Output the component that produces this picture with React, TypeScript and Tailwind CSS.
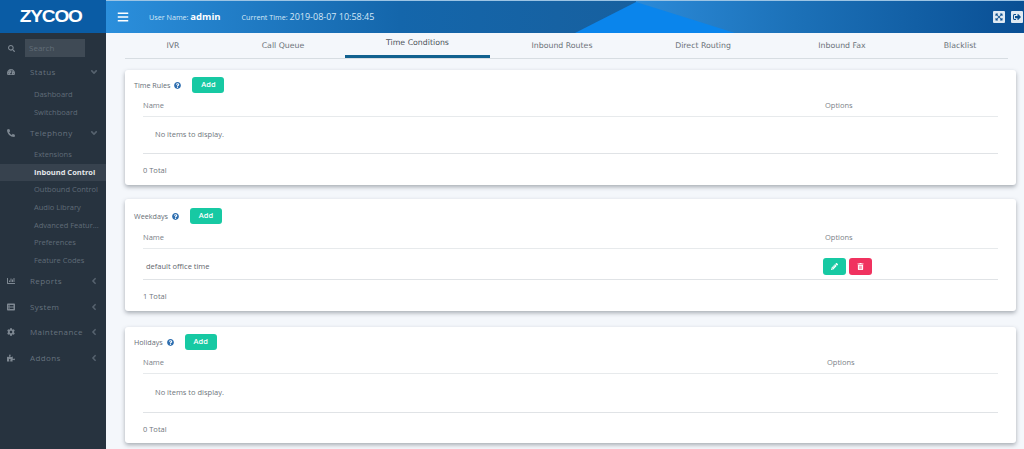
import React from 'react'
import {
  FaAngleDown,
  FaAngleLeft,
  FaBars,
  FaChartBar,
  FaCog,
  FaExpandArrowsAlt,
  FaListAlt,
  FaPencilAlt,
  FaPhone,
  FaPuzzlePiece,
  FaQuestionCircle,
  FaSearch,
  FaSignOutAlt,
  FaTachometerAlt,
  FaTrashAlt,
} from 'react-icons/fa'

const tabs = [
  { name: 'IVR', width: 'w-[96px]' },
  { name: 'Call Queue', width: 'w-[124px]' },
  { name: 'Time Conditions', width: 'w-[145px]', active: true },
  { name: 'Inbound Routes', width: 'w-[144px]' },
  { name: 'Direct Routing', width: 'w-[138px]' },
  { name: 'Inbound Fax', width: 'w-[140px]' },
  { name: 'Blacklist', width: 'w-[96px]' },
]

const SideHead = ({ icon, label, open, className }: { icon: React.ReactNode; label: string; open?: boolean; className: string }) => (
  <div className={`flex items-center text-[8px] text-[#66727e] ${className}`}>
    <span className="w-[30px] pl-[7px] text-[8px] text-[#7e8892]">{icon}</span>
    <span className="flex-1 tracking-[0.4px]">{label}</span>
    <span className="w-[17px] text-[10px] text-[#56626e]">{open ? <FaAngleDown /> : <FaAngleLeft />}</span>
  </div>
)

const SubItem = ({ label, active }: { label: string; active?: boolean }) => (
  <div className={`h-[17.6px] pl-[34px] text-[7.5px] leading-[17.6px] whitespace-nowrap ${active ? 'bg-[#37424e] font-bold text-[#e4e7ea]' : 'text-[#606c78]'}`}>
    {label}
  </div>
)

const Sidebar = () => (
  <aside className="flex h-full w-[106px] shrink-0 flex-col bg-[#27333f] font-['Open_Sans',sans-serif]">
    <div className="flex h-[33px] items-center justify-center bg-[#0a5ca5] pr-[4px]">
      <span className="scale-x-[1.12] font-['Liberation_Sans',sans-serif] text-[17px] font-bold leading-none tracking-[-1px] text-white">ZYCOO</span>
    </div>
    <div className="flex items-center pt-[6px]">
      <span className="w-[25px] pl-[8px] text-[7px] text-[#7e8892]"><FaSearch /></span>
      <div className="flex h-[18px] w-[60px] items-center bg-[#3f4a55] pl-[4px] text-[8px] text-[#626d78]">Search</div>
    </div>
    <SideHead icon={<FaTachometerAlt />} label="Status" open className="mt-[5px] h-[20px]" />
    <div className="pt-[4px]">
      <SubItem label="Dashboard" />
      <SubItem label="Switchboard" />
    </div>
    <SideHead icon={<FaPhone className="scale-x-[-1]" />} label="Telephony" open className="mt-[2px] h-[20px]" />
    <div className="pt-[3px]">
      <SubItem label="Extensions" />
      <SubItem label="Inbound Control" active />
      <SubItem label="Outbound Control" />
      <SubItem label="Audio Library" />
      <SubItem label="Advanced Featur..." />
      <SubItem label="Preferences" />
      <SubItem label="Feature Codes" />
    </div>
    <SideHead icon={<FaChartBar />} label="Reports" className="-mt-[1px] h-[25.5px]" />
    <SideHead icon={<FaListAlt />} label="System" className="h-[25.5px]" />
    <SideHead icon={<FaCog />} label="Maintenance" className="h-[25.5px]" />
    <SideHead icon={<FaPuzzlePiece />} label="Addons" className="h-[25.5px]" />
  </aside>
)

const Header = () => (
  <header className="relative flex h-[33px] shrink-0 items-center overflow-hidden border-t border-[#9cc4e4] bg-[linear-gradient(90deg,#2b8fdc_0%,#1466ab_32%,#17609f_57.7%,#2b8ad8_57.7%,#1c71b8_75%,#094f94_100%)] text-white">
    {/* bright wedge behind the header text */}
    <svg className="absolute inset-0 h-full w-full" viewBox="0 0 918 33" preserveAspectRatio="none">
      <polygon points="469,33 530,1 629,33" fill="#0a85ec" />
    </svg>
    <div className="relative flex flex-1 items-center pl-[11px] font-['Open_Sans',sans-serif]">
      <FaBars className="text-[12px]" />
      <span className="ml-[20px] text-[7.2px] text-[#d5e8f7]">User Name: <b className="text-[9.5px] text-white">admin</b></span>
      <span className="ml-[21px] text-[7.2px] text-[#d5e8f7]">Current Time: <span className="text-[9px]">2019-08-07 10:58:45</span></span>
    </div>
    <div className="relative flex items-center gap-[6px] pr-[1px]">
      <span className="flex size-[12px] items-center justify-center rounded-[1px] bg-[#dfeaf3] text-[8px] text-[#0b4f8e]"><FaExpandArrowsAlt /></span>
      <span className="flex size-[12px] items-center justify-center rounded-[1px] bg-[#dfeaf3] text-[8px] text-[#0b4f8e]"><FaSignOutAlt /></span>
    </div>
  </header>
)

const Tabs = () => (
  <nav className="ml-[19px] mr-[16px] flex h-[26px] border-b border-[#d7dde2] font-['DejaVu_Sans',sans-serif] text-[7.8px] text-[#6b7279]">
    {tabs.map((tab) => (
      <div
        key={tab.name}
        className={`flex h-[25px] items-center justify-center ${tab.width} ${tab.active ? 'border-b-[3px] border-[#11618f] pb-[3px] text-[#4d545b]' : ''}`}
      >
        {tab.name}
      </div>
    ))}
  </nav>
)

const Card = ({
  title,
  optionsClass,
  headClass,
  className,
  children,
}: {
  title: string
  optionsClass: string
  headClass: string
  className: string
  children: React.ReactNode
}) => (
  <section className={`w-[891px] rounded-[3px] bg-white pl-[9px] pr-[18px] shadow-[0_2px_4px_rgba(70,80,90,0.45)] ${className}`}>
    <div className="flex h-[16px] items-center text-[7.2px] text-[#666e76]">
      <span>{title}</span>
      <FaQuestionCircle className="ml-[4px] text-[7px] text-[#2f6fb0]" />
      <button className="ml-[11px] flex h-[16px] w-[32px] items-center justify-center rounded-[3px] bg-[#17c9a3] text-[7.5px] font-semibold text-white">Add</button>
    </div>
    <div className="pl-[9px]">
      <div className={`flex items-end border-b border-[#e7eaec] pb-[5px] text-[7.5px] text-[#7b8289] ${headClass}`}>
        <span className="flex-1">Name</span>
        <span className={optionsClass}>Options</span>
      </div>
      {children}
    </div>
  </section>
)

const Empty = ({ rowClass }: { rowClass: string }) => (
  <>
    <div className={`flex items-center border-b border-[#e0e3e6] pl-[12px] text-[7.5px] text-[#6f767d] ${rowClass}`}>No items to display.</div>
    <div className="flex h-[34px] items-center text-[7.5px] text-[#6f767d]">0 Total</div>
  </>
)

export default function App() {
  return (
    <div className="flex h-[449px] w-[1024px] overflow-hidden bg-[#f4f7fb] font-['Open_Sans',sans-serif]">
      <Sidebar />
      <main className="flex min-w-0 flex-1 flex-col">
        <Header />
        <Tabs />
        <div className="flex flex-col pl-[19px]">
          <Card title="Time Rules" optionsClass="w-[173px]" headClass="h-[24px]" className="mt-[11px] h-[115px] pt-[7px]">
            <Empty rowClass="h-[37px]" />
          </Card>
          <Card title="Weekdays" optionsClass="w-[173px]" headClass="h-[25px]" className="mt-[14px] h-[112px] pt-[9px]">
            <div className="flex h-[31px] items-center border-b border-[#e0e3e6] pt-[5px] text-[7.5px] text-[#5f666d]">
              <span className="flex-1 pl-[3px]">default office time</span>
              <div className="flex w-[175px] gap-[3px]">
                <button className="flex h-[17px] w-[23px] items-center justify-center rounded-[3px] bg-[#17c9a3] text-[7px] text-white"><FaPencilAlt /></button>
                <button className="flex h-[17px] w-[23px] items-center justify-center rounded-[3px] bg-[#f0325f] text-[7px] text-white"><FaTrashAlt /></button>
              </div>
            </div>
            <div className="flex h-[34px] items-center text-[7.5px] text-[#6f767d]">1 Total</div>
          </Card>
          <Card title="Holidays" optionsClass="w-[171px]" headClass="h-[24px]" className="mt-[16px] h-[116px] pt-[7px]">
            <Empty rowClass="h-[39px]" />
          </Card>
        </div>
      </main>
    </div>
  )
}
